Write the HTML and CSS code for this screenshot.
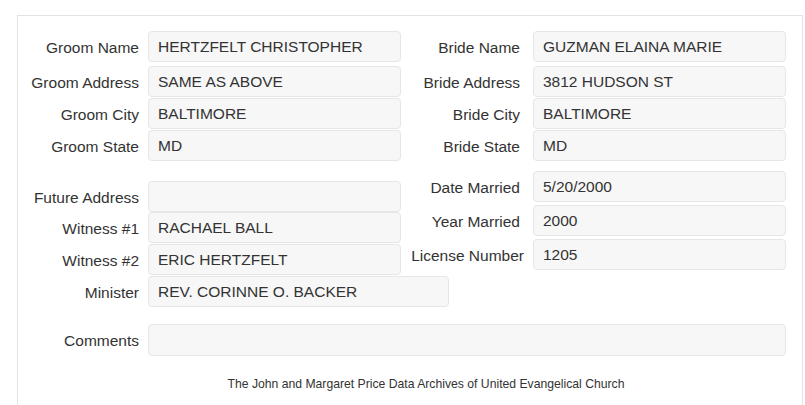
FILE: index.html
```html
<!DOCTYPE html>
<html lang="en">
<head>
    <meta charset="UTF-8">
    <title>Marriage Record</title>
    <link rel="stylesheet" href="styles.css">
</head>
<body>
    <div class="record">
        <div class="top">
            <label class="lbl">Groom Name</label>
            <div class="val">HERTZFELT CHRISTOPHER</div>
            <label class="lbl lbl-right">Bride Name</label>
            <div class="val">GUZMAN ELAINA MARIE</div>

            <label class="lbl">Groom Address</label>
            <div class="val">SAME AS ABOVE</div>
            <label class="lbl lbl-right">Bride Address</label>
            <div class="val">3812 HUDSON ST</div>

            <label class="lbl">Groom City</label>
            <div class="val">BALTIMORE</div>
            <label class="lbl lbl-right">Bride City</label>
            <div class="val">BALTIMORE</div>

            <label class="lbl">Groom State</label>
            <div class="val">MD</div>
            <label class="lbl lbl-right">Bride State</label>
            <div class="val">MD</div>
        </div>

        <div class="bottom">
            <div class="col col-left">
                <div class="field">
                    <label class="lbl">Future Address</label>
                    <div class="val"></div>
                </div>
                <div class="field">
                    <label class="lbl">Witness #1</label>
                    <div class="val">RACHAEL BALL</div>
                </div>
                <div class="field">
                    <label class="lbl">Witness #2</label>
                    <div class="val">ERIC HERTZFELT</div>
                </div>
                <div class="field">
                    <label class="lbl">Minister</label>
                    <div class="val val-wide">REV. CORINNE O. BACKER</div>
                </div>
            </div>
            <div class="col col-right">
                <div class="field">
                    <label class="lbl lbl-right">Date Married</label>
                    <div class="val">5/20/2000</div>
                </div>
                <div class="field">
                    <label class="lbl lbl-right">Year Married</label>
                    <div class="val">2000</div>
                </div>
                <div class="field">
                    <label class="lbl lbl-right lbl-long">License Number</label>
                    <div class="val">1205</div>
                </div>
            </div>
        </div>

        <div class="comments">
            <label class="lbl">Comments</label>
            <div class="val val-full"></div>
        </div>

        <div class="footer">The John and Margaret Price Data Archives of United Evangelical Church</div>
    </div>
</body>
</html>
```

FILE: styles.css
```css
body {
    margin: 0;
    padding: 0;
    background-color: #fff;
    font-family: "Liberation Sans", Arial, sans-serif;
    color: #333;
}

.record {
    margin: 15px 0 0 17px;
    width: 786px;
    height: 390px;
    border: 1px solid #e3e3e3;
    border-bottom: none;
    padding: 15px 16px 0 0;
    box-sizing: border-box;
    overflow: hidden;
}

.lbl {
    display: block;
    box-sizing: border-box;
    height: 31px;
    text-align: right;
    font-size: 15.5px;
    line-height: 29px;
    padding: 2px 9px 0 0;
    white-space: nowrap;
}

.lbl-right {
    padding-right: 13px;
}

.lbl-long {
    margin-right: -4px;
}

.val {
    box-sizing: border-box;
    height: 31px;
    line-height: 29px;
    padding: 0 9px;
    font-size: 15.5px;
    background-color: #f7f7f7;
    border: 1px solid #e6e6e6;
    border-radius: 4px;
    white-space: nowrap;
}

/* top block: groom / bride side by side */
.top {
    display: grid;
    grid-template-columns: 130px 253px 132px 253px;
    grid-template-rows: 35px 32px 32px 32px;
    align-items: start;
}

.bottom {
    display: grid;
    grid-template-columns: 383px 385px;
}

.col {
    display: flex;
    flex-direction: column;
}

.col-left {
    padding-top: 19px;
    gap: 0;
}

.col-right {
    padding-top: 9px;
    gap: 3px;
}

.col-left .field {
    display: grid;
    grid-template-columns: 130px 253px;
}

.col-left .field + .field {
    margin-top: 1px;
}

.col-left .field:nth-child(2) {
    margin-top: 0;
}

.col-right .field {
    display: grid;
    grid-template-columns: 132px 253px;
}

.val-wide {
    width: 301px;
}

.comments {
    display: grid;
    grid-template-columns: 130px 638px;
    margin-top: 17px;
}

.comments .lbl {
    height: 32px;
    line-height: 30px;
}

.val-full {
    height: 32px;
}

.footer {
    font-size: 12.2px;
    text-align: center;
    padding-left: 48px;
    margin-top: 21px;
}
```
